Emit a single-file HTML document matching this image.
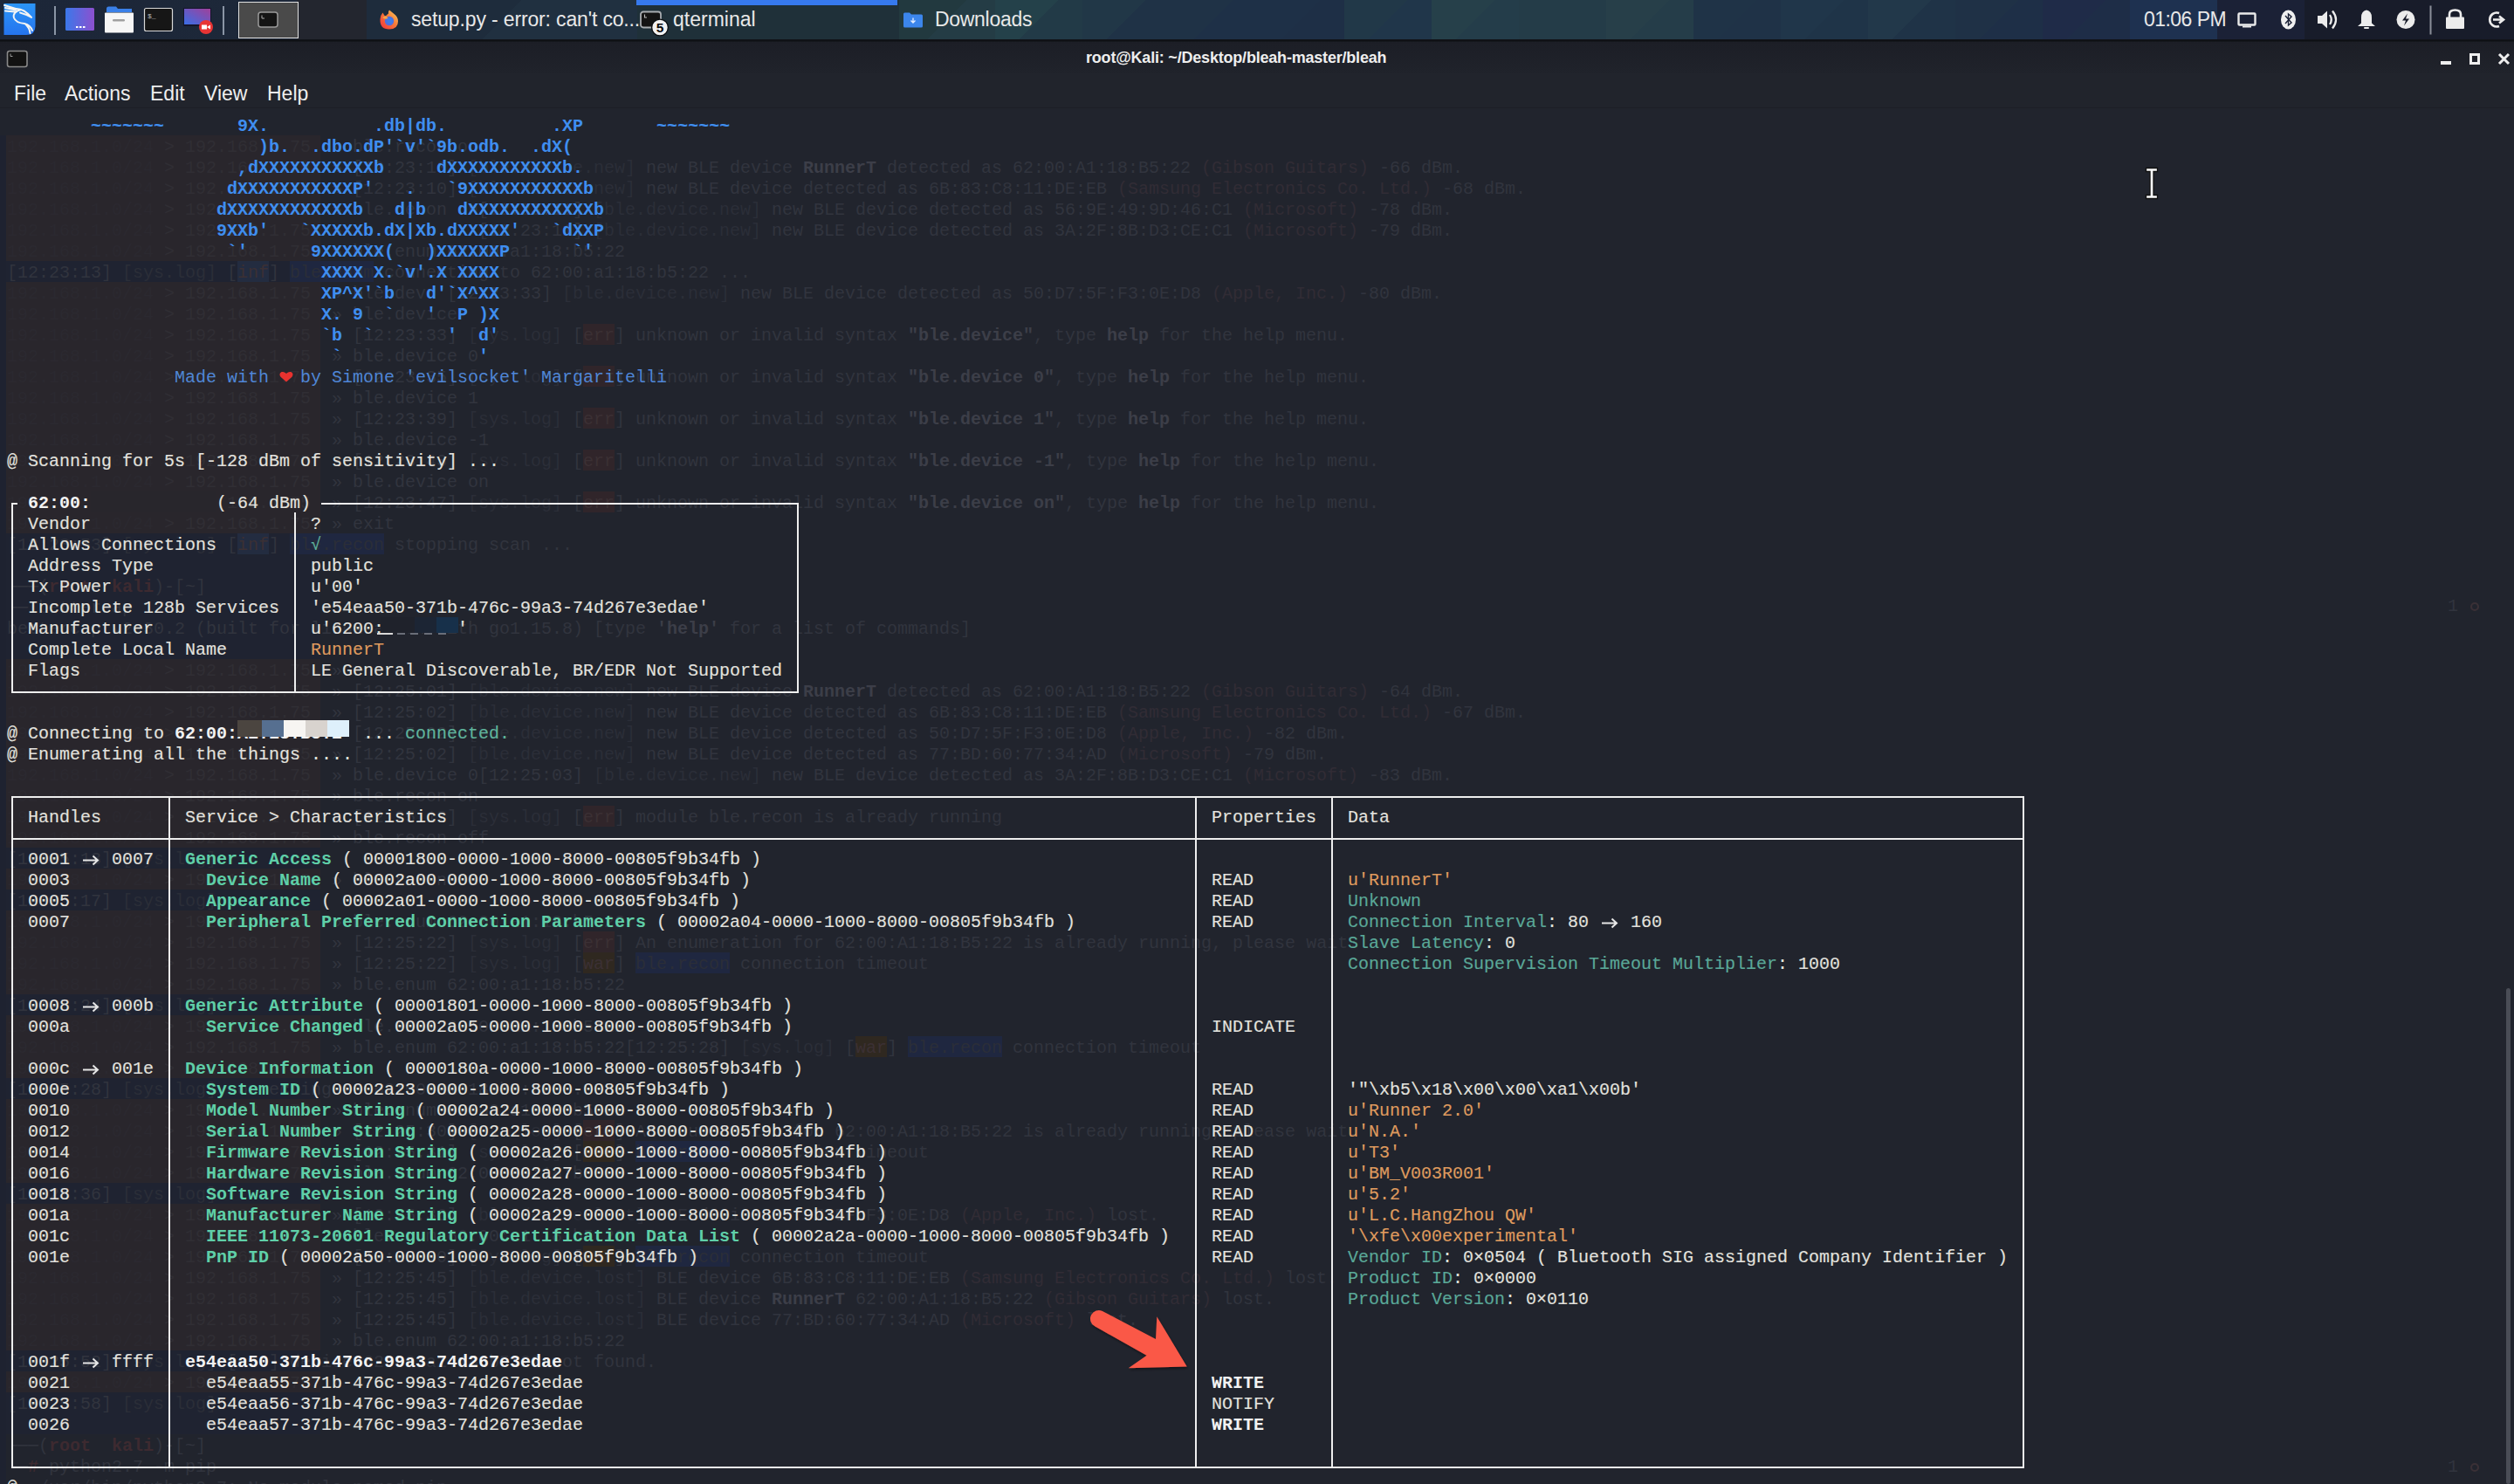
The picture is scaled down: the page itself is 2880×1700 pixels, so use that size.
<!DOCTYPE html>
<html><head><meta charset="utf-8">
<style>
html,body{margin:0;padding:0;}
body{width:2880px;height:1700px;overflow:hidden;position:relative;background:#21242d;font-family:"Liberation Sans",sans-serif;}
#taskbar{position:absolute;left:0;top:0;width:2880px;height:45px;background:#1e2a3c;}
#tb-shadow{position:absolute;left:0;top:45px;width:2880px;height:3px;background:linear-gradient(180deg,#14161c,#0e1014 50%,#171a20);}
#titlebar{position:absolute;left:0;top:48px;width:2880px;height:36px;background:linear-gradient(180deg,#1c1e26,#20232b);}
#menubar{position:absolute;left:0;top:84px;width:2880px;height:39px;background:#21242c;border-bottom:1px solid #1d1f27;}
#term{position:absolute;left:0;top:124px;width:2880px;height:1576px;background:#21242d;}
.s{position:absolute;white-space:pre;font-family:"Liberation Mono",monospace;font-size:20px;line-height:24px;height:24px;}
.w{color:#e2e1de;-webkit-text-stroke:0.15px #e2e1de;}
.b{color:#f2f2f2;font-weight:bold;}
.bl{color:#3f8ef0;font-weight:bold;}
.bln{color:#4f86d6;}
.g{color:#5fcfa8;font-weight:bold;}
.gr{color:#5fb39c;-webkit-text-stroke:0.15px #5fb39c;}
.t{color:#5aa898;-webkit-text-stroke:0.15px #5aa898;}
.o{color:#df9a5e;-webkit-text-stroke:0.15px #df9a5e;}
.gb{position:absolute;height:24px;}
#ghostleft{position:absolute;left:0;top:155px;width:7px;height:1545px;background:#1e2230;}
.gt{color:#31343e;}
.gd{color:#2b2e38;}
.gbo{color:#3c3e48;font-weight:bold;}
.gr2{color:#312c35;}
.gred{color:#3d2a30;font-weight:bold;}
.gtag{color:#3b3034;}
.gp1{color:#2b2930;}
.gp2{color:#302e34;}
.ln{position:absolute;background:#eeeeee;}
.heart,.arr{display:inline-block;vertical-align:top;}
.heart svg,.arr svg{display:block;}
.heart{width:12px;height:24px;}
.arr{width:24px;height:24px;}
.tbt{position:absolute;top:9px;font-size:23px;color:#e8e8e8;white-space:pre;}
#title{position:absolute;left:1244px;top:56px;font-size:18px;letter-spacing:-0.2px;font-weight:bold;color:#eeeeee;white-space:pre;}
.menu{position:absolute;top:94px;font-size:23px;color:#eeeeee;}
</style></head><body>
<div id="taskbar">
 <div style="position:absolute;left:0;top:0;width:340px;height:45px;background:linear-gradient(90deg,#1c2638,#1d2839)"></div><div style="position:absolute;left:340px;top:0;width:80px;height:45px;background:#23262f"></div>
 <div style="position:absolute;left:420px;top:0;width:310px;height:45px;background:linear-gradient(135deg,#1e2c3c 50%,#203040 50%)"></div>
 <div style="position:absolute;left:730px;top:0;width:300px;height:45px;background:#1f3039"></div>
 <div style="position:absolute;left:1030px;top:0;width:110px;height:45px;background:linear-gradient(135deg,#22393f 50%,#243c45 50%)"></div>
 <div style="position:absolute;left:1140px;top:0;width:100px;height:45px;background:linear-gradient(135deg,#24414a 50%,#223a47 50%)"></div>
 <div style="position:absolute;left:1240px;top:0;width:100px;height:45px;background:linear-gradient(135deg,#213747 50%,#1f3246 50%)"></div>
 <div style="position:absolute;left:1340px;top:0;width:100px;height:45px;background:linear-gradient(135deg,#1f3246 50%,#1e3047 50%)"></div>
 <div style="position:absolute;left:1440px;top:0;width:100px;height:45px;background:linear-gradient(135deg,#1e3047 50%,#1e2f46 50%)"></div>
 <div style="position:absolute;left:1540px;top:0;width:100px;height:45px;background:linear-gradient(135deg,#213848 50%,#20364a 50%)"></div>
 <div style="position:absolute;left:1640px;top:0;width:100px;height:45px;background:linear-gradient(135deg,#26404a 50%,#243d4a 50%)"></div>
 <div style="position:absolute;left:1740px;top:0;width:100px;height:45px;background:linear-gradient(135deg,#243c48 50%,#243c48 50%)"></div>
 <div style="position:absolute;left:1840px;top:0;width:100px;height:45px;background:linear-gradient(135deg,#273f49 50%,#253d49 50%)"></div>
 <div style="position:absolute;left:1940px;top:0;width:100px;height:45px;background:linear-gradient(135deg,#1f3347 50%,#1f3247 50%)"></div>
 <div style="position:absolute;left:2040px;top:0;width:100px;height:45px;background:linear-gradient(135deg,#20364a 50%,#1f3448 50%)"></div>
 <div style="position:absolute;left:2140px;top:0;width:100px;height:45px;background:linear-gradient(135deg,#22384a 50%,#1f3347 50%)"></div>
 <div style="position:absolute;left:2240px;top:0;width:100px;height:45px;background:linear-gradient(135deg,#1f3146 50%,#1e2f47 50%)"></div>
 <div style="position:absolute;left:2340px;top:0;width:100px;height:45px;background:linear-gradient(135deg,#1f2b48 50%,#1e2d47 50%)"></div>
 <div style="position:absolute;left:2440px;top:0;width:100px;height:45px;background:#1e3150"></div>
 <div style="position:absolute;left:2540px;top:0;width:100px;height:45px;background:#1b2136"></div>
 <div style="position:absolute;left:2640px;top:0;width:240px;height:45px;background:#181c2a"></div>
 <!-- kali logo -->
 <svg style="position:absolute;left:0;top:0" width="48" height="45" viewBox="0 0 48 45">
  <defs><linearGradient id="kg" x1="0" y1="0" x2="0" y2="1"><stop offset="0" stop-color="#2b95f8"/><stop offset="1" stop-color="#2574ee"/></linearGradient></defs>
  <path d="M4.5 4 H40.5 V30 Q40.5 40 30 40 H4.5 Z" fill="url(#kg)"/>
  <path d="M5 6 L18 10 M6 9 L18 11.5 M6 12.5 L17 13.5 M17 10 Q27 9 36 20 Q29 16 23 14.5 M24 11 Q14 14 16 20.5 Q18 26 28 27 Q35 29 37 35 M29 27.5 Q34 32 34.5 38" stroke="#f4f4f4" stroke-width="2" fill="none" stroke-linecap="round" stroke-linejoin="round"/>
 </svg>
 <div style="position:absolute;left:62px;top:7px;width:2px;height:33px;background:#8a95a5"></div>
 <div style="position:absolute;left:255px;top:7px;width:2px;height:33px;background:#8a95a5"></div>
 <svg style="position:absolute;left:70px;top:0" width="190" height="45" viewBox="70 0 190 45">
  <defs>
   <linearGradient id="pg" x1="0" y1="0" x2="1" y2="0"><stop offset="0" stop-color="#3b78ea"/><stop offset="1" stop-color="#8c50cf"/></linearGradient>
   <linearGradient id="pg2" x1="0" y1="1" x2="1" y2="0"><stop offset="0" stop-color="#3a6ee6"/><stop offset="1" stop-color="#a0409a"/></linearGradient>
  </defs>
  <rect x="75" y="9" width="33" height="26" rx="1.5" fill="url(#pg)"/>
  <rect x="87" y="30" width="2.5" height="2" fill="#fff"/><rect x="91" y="30" width="2.5" height="2" fill="#fff"/><rect x="95" y="30" width="2.5" height="2" fill="#fff"/>
  <path d="M122 10 Q122 7.5 124.5 7.5 H133 L135 10 H151 V14 H122 Z" fill="#3a80e8"/>
  <rect x="120" y="14.5" width="33" height="23" rx="1" fill="#f6f6f6"/>
  <rect x="129" y="22" width="14" height="2.5" rx="1.2" fill="#a0a0a0"/>
  <rect x="165.5" y="9.5" width="32" height="26" rx="2" fill="#161616" stroke="#d8d8d8" stroke-width="1.2"/>
  <text x="169" y="21" font-family="Liberation Mono" font-size="8" fill="#bbb">$_</text>
  <rect x="210" y="9" width="32" height="21" fill="#15152a"/>
  <rect x="211" y="10" width="30" height="18" fill="url(#pg2)"/>
  <circle cx="236" cy="31" r="8" fill="#e83434"/>
  <rect x="231" y="28.5" width="6" height="5" fill="#fff"/><path d="M237 31 L241 28.5 V33.5 Z" fill="#fff"/>
 </svg>
 <div style="position:absolute;left:273px;top:2px;width:67px;height:40px;background:#4a4a4a;border:1.5px solid #e0e0e0"></div>
 <svg style="position:absolute;left:295px;top:13px" width="25" height="20" viewBox="0 0 25 20"><rect x="1" y="1" width="22" height="17" rx="3" fill="#141414" stroke="#9a9a9a" stroke-width="1.5"/><path d="M5 4.5 V8 H8" stroke="#aaa" stroke-width="1" fill="none"/></svg>
 <!-- tabs -->
 <svg style="position:absolute;left:432px;top:9px" width="27" height="27" viewBox="0 0 27 27">
  <defs><linearGradient id="ffg" x1="0" y1="1" x2="1" y2="0"><stop offset="0" stop-color="#f0303e"/><stop offset="0.55" stop-color="#f77a38"/><stop offset="1" stop-color="#fbd660"/></linearGradient></defs>
  <path d="M3.5 13 Q4 8 6.5 5.5 Q8 8.5 9.5 10 Q11 7.5 13 6.5 Q12.5 4 14 2.5 Q17 5 19.5 7 Q24 10 24 15.5 Q24 24.5 13.8 24.5 Q3 24.5 3.5 13 Z" fill="url(#ffg)"/>
  <circle cx="14" cy="15" r="5.2" fill="#4f6ee0"/><circle cx="14.5" cy="15" r="3.2" fill="#3d7de8"/>
  <path d="M6 11 Q9 14 12.5 12 L10 9 Z" fill="#f9a548"/>
 </svg>
 <div class="tbt" style="left:471px;letter-spacing:-0.15px">setup.py - error: can't co...</div>
 <div style="position:absolute;left:729px;top:0;width:299px;height:6px;background:#3679ee"></div>
 <svg style="position:absolute;left:732px;top:12px" width="36" height="32" viewBox="0 0 36 32"><rect x="2" y="1.5" width="23" height="18" rx="3" fill="#141414" stroke="#a8acb0" stroke-width="1.8"/><path d="M6.5 4.5 V8 H9" stroke="#bbb" stroke-width="1.1" fill="none"/><circle cx="24" cy="19.5" r="9.4" fill="#f2f2f2" stroke="#0c0f12" stroke-width="1.4"/><text x="24" y="25" text-anchor="middle" font-family="Liberation Sans" font-weight="bold" font-size="15.5" fill="#0a0a0a">5</text></svg>
 <div class="tbt" style="left:771px">qterminal</div>
 <svg style="position:absolute;left:1034px;top:13px" width="24" height="20" viewBox="0 0 24 20"><path d="M1 3 Q1 1.5 2.5 1.5 H8 L10 3.5 H21.5 Q23 3.5 23 5 V17 Q23 18.5 21.5 18.5 H2.5 Q1 18.5 1 17 Z" fill="#3c86ec"/><path d="M12 7.5 V13 M9.5 10.5 L12 13 L14.5 10.5" stroke="#e8f0ff" stroke-width="1.3" fill="none"/></svg>
 <div class="tbt" style="left:1071px;letter-spacing:-0.3px">Downloads</div>
 <!-- right -->
 <div class="tbt" style="left:2456px;letter-spacing:-0.55px">01:06 PM</div>
 <svg style="position:absolute;left:2555px;top:0" width="325" height="45" viewBox="2555 0 325 45">
  <rect x="2564.5" y="15.5" width="19" height="13" rx="1" fill="none" stroke="#eaeaea" stroke-width="2.4"/>
  <path d="M2569 30.5 H2579" stroke="#eaeaea" stroke-width="2"/>
  <ellipse cx="2621.5" cy="22.5" rx="8.5" ry="11" fill="#f0f0f0"/>
  <path d="M2618 18 L2625 26 L2621.5 29 V16 L2625 19 L2618 27" stroke="#1b2136" stroke-width="1.4" fill="none"/>
  <path d="M2655 18 H2660 L2666 12.5 V32.5 L2660 27 H2655 Z" fill="#ececec"/>
  <path d="M2669 17 Q2672.5 22.5 2669 28" stroke="#ececec" stroke-width="2.3" fill="none"/>
  <path d="M2672 12.5 Q2680 22.5 2672 32.5" stroke="#ececec" stroke-width="2.3" fill="none"/>
  <path d="M2711 11.5 Q2705 12.5 2705 20 V26.5 L2701 30 H2721 L2717 26.5 V20 Q2717 12.5 2711 11.5 Z" fill="#ececec"/>
  <rect x="2708" y="31" width="6" height="2" rx="1" fill="#ececec"/>
  <circle cx="2756" cy="22.5" r="10.5" fill="#ececec"/>
  <path d="M2758 15.5 L2752 23.5 H2756 L2754 29.5 L2760 21.5 H2756 Z" fill="#181c2a"/>
  <rect x="2783.5" y="6.5" width="2" height="33" fill="#8a8e98"/>
  <path d="M2806 20 V16.5 Q2806 11.5 2812.5 11.5 Q2819 11.5 2819 16.5 V20" stroke="#ececec" stroke-width="2.6" fill="none"/>
  <rect x="2802" y="19.5" width="21" height="13.5" rx="1" fill="#ececec"/>
  <path d="M2863 15 A8 8 0 1 0 2863 30" stroke="#ececec" stroke-width="2.6" fill="none"/>
  <path d="M2856 22.5 H2866 M2863 18.5 L2868 22.5 L2863 26.5" stroke="#ececec" stroke-width="2.6" fill="none"/>
 </svg>
</div>
<div id="tb-shadow"></div>
<div id="titlebar"></div>
<div id="menubar"></div>
<div id="term"></div>
<svg style="position:absolute;left:7px;top:57px" width="26" height="22" viewBox="0 0 26 22"><rect x="1.5" y="1.5" width="22.5" height="18" rx="2.5" fill="#121212" stroke="#8a8a8a" stroke-width="1.6"/><path d="M5 4.5 V7.5 H7.5" stroke="#999" stroke-width="1" fill="none"/></svg>
<div id="title">root@Kali: ~/Desktop/bleah-master/bleah</div>
<div style="position:absolute;left:2796px;top:70px;width:12px;height:4px;background:#eeeeee"></div>
<div style="position:absolute;left:2829px;top:61px;width:6px;height:7px;border:3px solid #eeeeee"></div>
<svg style="position:absolute;left:2860px;top:59px" width="17" height="17" viewBox="0 0 17 17"><path d="M3 3 L14 14 M14 3 L3 14" stroke="#eeeeee" stroke-width="3"/></svg>
<div class="menu" style="left:16px">File</div>
<div class="menu" style="left:74px">Actions</div>
<div class="menu" style="left:172px">Edit</div>
<div class="menu" style="left:234px">View</div>
<div class="menu" style="left:306px">Help</div>

<div id="ghostleft"></div>
<div class="gb" style="left:7px;top:155px;width:360px;background:#29262c"></div>
<div class="gb" style="left:7px;top:179px;width:360px;background:#29262c"></div>
<div class="gb" style="left:7px;top:203px;width:360px;background:#29262c"></div>
<div class="gb" style="left:7px;top:227px;width:360px;background:#29262c"></div>
<div class="gb" style="left:7px;top:251px;width:360px;background:#29262c"></div>
<div class="gb" style="left:7px;top:275px;width:360px;background:#29262c"></div>
<div class="gb" style="left:7px;top:299px;width:360px;background:#1f2331"></div>
<div class="gb" style="left:272px;top:299px;width:36px;background:#232c40"></div>
<div class="gb" style="left:332px;top:299px;width:96px;background:#1f2740"></div>
<div class="gb" style="left:7px;top:323px;width:360px;background:#29262c"></div>
<div class="gb" style="left:7px;top:347px;width:360px;background:#29262c"></div>
<div class="gb" style="left:7px;top:371px;width:360px;background:#29262c"></div>
<div class="gb" style="left:668px;top:371px;width:36px;background:#30252a"></div>
<div class="gb" style="left:7px;top:419px;width:360px;background:#29262c"></div>
<div class="gb" style="left:668px;top:419px;width:36px;background:#30252a"></div>
<div class="gb" style="left:7px;top:467px;width:360px;background:#29262c"></div>
<div class="gb" style="left:668px;top:467px;width:36px;background:#30252a"></div>
<div class="gb" style="left:7px;top:515px;width:360px;background:#29262c"></div>
<div class="gb" style="left:668px;top:515px;width:36px;background:#30252a"></div>
<div class="gb" style="left:7px;top:563px;width:360px;background:#29262c"></div>
<div class="gb" style="left:668px;top:563px;width:36px;background:#30252a"></div>
<div class="gb" style="left:7px;top:395px;width:360px;background:#29262c"></div>
<div class="gb" style="left:7px;top:443px;width:360px;background:#29262c"></div>
<div class="gb" style="left:7px;top:491px;width:360px;background:#29262c"></div>
<div class="gb" style="left:7px;top:539px;width:360px;background:#29262c"></div>
<div class="gb" style="left:7px;top:587px;width:360px;background:#29262c"></div>
<div class="gb" style="left:7px;top:611px;width:360px;background:#1f2331"></div>
<div class="gb" style="left:272px;top:611px;width:36px;background:#232c40"></div>
<div class="gb" style="left:332px;top:611px;width:108px;background:#1f2740"></div>
<div class="gb" style="left:7px;top:635px;width:360px;background:#1f2331"></div>
<div class="gb" style="left:7px;top:659px;width:360px;background:#1f2331"></div>
<div class="gb" style="left:7px;top:683px;width:360px;background:#1f2331"></div>
<div class="gb" style="left:7px;top:707px;width:360px;background:#1f2331"></div>
<div class="gb" style="left:7px;top:731px;width:360px;background:#1f2331"></div>
<div class="gb" style="left:7px;top:755px;width:360px;background:#29262c"></div>
<div class="gb" style="left:7px;top:779px;width:360px;background:#29262c"></div>
<div class="gb" style="left:7px;top:803px;width:360px;background:#29262c"></div>
<div class="gb" style="left:7px;top:827px;width:360px;background:#29262c"></div>
<div class="gb" style="left:7px;top:851px;width:360px;background:#29262c"></div>
<div class="gb" style="left:7px;top:875px;width:360px;background:#29262c"></div>
<div class="gb" style="left:7px;top:899px;width:360px;background:#29262c"></div>
<div class="gb" style="left:7px;top:923px;width:360px;background:#29262c"></div>
<div class="gb" style="left:668px;top:923px;width:36px;background:#30252a"></div>
<div class="gb" style="left:7px;top:947px;width:360px;background:#29262c"></div>
<div class="gb" style="left:7px;top:971px;width:360px;background:#1f2331"></div>
<div class="gb" style="left:7px;top:995px;width:360px;background:#29262c"></div>
<div class="gb" style="left:7px;top:1019px;width:360px;background:#1f2331"></div>
<div class="gb" style="left:7px;top:1043px;width:360px;background:#29262c"></div>
<div class="gb" style="left:7px;top:1067px;width:360px;background:#29262c"></div>
<div class="gb" style="left:668px;top:1067px;width:36px;background:#30252a"></div>
<div class="gb" style="left:7px;top:1091px;width:360px;background:#29262c"></div>
<div class="gb" style="left:668px;top:1091px;width:36px;background:#2f2820"></div>
<div class="gb" style="left:728px;top:1091px;width:108px;background:#1f2740"></div>
<div class="gb" style="left:7px;top:1115px;width:360px;background:#29262c"></div>
<div class="gb" style="left:7px;top:1139px;width:360px;background:#1f2331"></div>
<div class="gb" style="left:7px;top:1163px;width:360px;background:#29262c"></div>
<div class="gb" style="left:7px;top:1187px;width:360px;background:#29262c"></div>
<div class="gb" style="left:980px;top:1187px;width:36px;background:#2f2820"></div>
<div class="gb" style="left:1040px;top:1187px;width:108px;background:#1f2740"></div>
<div class="gb" style="left:7px;top:1211px;width:360px;background:#29262c"></div>
<div class="gb" style="left:7px;top:1235px;width:360px;background:#1f2331"></div>
<div class="gb" style="left:7px;top:1259px;width:360px;background:#29262c"></div>
<div class="gb" style="left:7px;top:1283px;width:360px;background:#29262c"></div>
<div class="gb" style="left:668px;top:1283px;width:36px;background:#30252a"></div>
<div class="gb" style="left:7px;top:1307px;width:360px;background:#29262c"></div>
<div class="gb" style="left:668px;top:1307px;width:36px;background:#2f2820"></div>
<div class="gb" style="left:728px;top:1307px;width:108px;background:#1f2740"></div>
<div class="gb" style="left:7px;top:1331px;width:360px;background:#29262c"></div>
<div class="gb" style="left:7px;top:1355px;width:360px;background:#1f2331"></div>
<div class="gb" style="left:7px;top:1379px;width:360px;background:#29262c"></div>
<div class="gb" style="left:7px;top:1403px;width:360px;background:#29262c"></div>
<div class="gb" style="left:7px;top:1427px;width:360px;background:#29262c"></div>
<div class="gb" style="left:668px;top:1427px;width:36px;background:#2f2820"></div>
<div class="gb" style="left:728px;top:1427px;width:108px;background:#1f2740"></div>
<div class="gb" style="left:7px;top:1451px;width:360px;background:#29262c"></div>
<div class="gb" style="left:7px;top:1475px;width:360px;background:#29262c"></div>
<div class="gb" style="left:7px;top:1499px;width:360px;background:#29262c"></div>
<div class="gb" style="left:7px;top:1523px;width:360px;background:#29262c"></div>
<div class="gb" style="left:7px;top:1547px;width:360px;background:#1f2331"></div>
<div class="gb" style="left:7px;top:1571px;width:360px;background:#29262c"></div>
<div class="gb" style="left:7px;top:1595px;width:360px;background:#1f2331"></div>
<div class="gb" style="left:7px;top:1619px;width:360px;background:#1f2331"></div>
<span class="s gp1" style="left:8px;top:157px">192.168.1.0/24</span>
<span class="s gp2" style="left:188px;top:157px">&gt; 192.168.1.75</span>
<span class="s gt" style="left:380px;top:157px">»</span>
<span class="s gt" style="left:404px;top:157px">ble.recon on</span>
<span class="s gp1" style="left:8px;top:181px">192.168.1.0/24</span>
<span class="s gp2" style="left:188px;top:181px">&gt; 192.168.1.75</span>
<span class="s gt" style="left:380px;top:181px">»</span>
<span class="s gt" style="left:404px;top:181px">[12:23:10]</span>
<span class="s gd" style="left:536px;top:181px">[ble.device.new]</span>
<span class="s gt" style="left:740px;top:181px">new BLE device</span>
<span class="s gbo" style="left:920px;top:181px">RunnerT</span>
<span class="s gt" style="left:1016px;top:181px">detected as 62:00:A1:18:B5:22 </span>
<span class="s gr2" style="left:1376px;top:181px">(Gibson Guitars)</span>
<span class="s gt" style="left:1580px;top:181px">-66 dBm.</span>
<span class="s gp1" style="left:8px;top:205px">192.168.1.0/24</span>
<span class="s gp2" style="left:188px;top:205px">&gt; 192.168.1.75</span>
<span class="s gt" style="left:380px;top:205px">»</span>
<span class="s gt" style="left:404px;top:205px">[12:23:10]</span>
<span class="s gd" style="left:536px;top:205px">[ble.device.new]</span>
<span class="s gt" style="left:740px;top:205px">new BLE device</span>
<span class="s gt" style="left:920px;top:205px">detected as 6B:83:C8:11:DE:EB </span>
<span class="s gr2" style="left:1280px;top:205px">(Samsung Electronics Co. Ltd.)</span>
<span class="s gt" style="left:1652px;top:205px">-68 dBm.</span>
<span class="s gp1" style="left:8px;top:229px">192.168.1.0/24</span>
<span class="s gp2" style="left:188px;top:229px">&gt; 192.168.1.75</span>
<span class="s gt" style="left:380px;top:229px">»</span>
<span class="s gt" style="left:404px;top:229px">ble.recon on</span>
<span class="s gt" style="left:548px;top:229px">[12:23:11]</span>
<span class="s gd" style="left:680px;top:229px">[ble.device.new]</span>
<span class="s gt" style="left:884px;top:229px">new BLE device</span>
<span class="s gt" style="left:1064px;top:229px">detected as 56:9E:49:9D:46:C1 </span>
<span class="s gr2" style="left:1424px;top:229px">(Microsoft)</span>
<span class="s gt" style="left:1568px;top:229px">-78 dBm.</span>
<span class="s gp1" style="left:8px;top:253px">192.168.1.0/24</span>
<span class="s gp2" style="left:188px;top:253px">&gt; 192.168.1.75</span>
<span class="s gt" style="left:380px;top:253px">»</span>
<span class="s gt" style="left:548px;top:253px">[12:23:11]</span>
<span class="s gd" style="left:680px;top:253px">[ble.device.new]</span>
<span class="s gt" style="left:884px;top:253px">new BLE device</span>
<span class="s gt" style="left:1064px;top:253px">detected as 3A:2F:8B:D3:CE:C1 </span>
<span class="s gr2" style="left:1424px;top:253px">(Microsoft)</span>
<span class="s gt" style="left:1568px;top:253px">-79 dBm.</span>
<span class="s gp1" style="left:8px;top:277px">192.168.1.0/24</span>
<span class="s gp2" style="left:188px;top:277px">&gt; 192.168.1.75</span>
<span class="s gt" style="left:380px;top:277px">»</span>
<span class="s gt" style="left:404px;top:277px">ble.enum 62:00:a1:18:b5:22</span>
<span class="s gt" style="left:8px;top:301px">[12:23:13]</span>
<span class="s gd" style="left:140px;top:301px">[sys.log]</span>
<span class="s gt" style="left:260px;top:301px">[</span>
<span class="s gtag" style="left:272px;top:301px">inf</span>
<span class="s gt" style="left:308px;top:301px">]</span>
<span class="s gd" style="left:332px;top:301px">ble.enum</span>
<span class="s gt" style="left:440px;top:301px">connecting to 62:00:a1:18:b5:22 ...</span>
<span class="s gp1" style="left:8px;top:325px">192.168.1.0/24</span>
<span class="s gp2" style="left:188px;top:325px">&gt; 192.168.1.75</span>
<span class="s gt" style="left:380px;top:325px">»</span>
<span class="s gt" style="left:404px;top:325px">ble.dev</span>
<span class="s gt" style="left:512px;top:325px">[12:23:33]</span>
<span class="s gd" style="left:644px;top:325px">[ble.device.new]</span>
<span class="s gt" style="left:848px;top:325px">new BLE device</span>
<span class="s gt" style="left:1028px;top:325px">detected as 50:D7:5F:F3:0E:D8 </span>
<span class="s gr2" style="left:1388px;top:325px">(Apple, Inc.)</span>
<span class="s gt" style="left:1556px;top:325px">-80 dBm.</span>
<span class="s gp1" style="left:8px;top:349px">192.168.1.0/24</span>
<span class="s gp2" style="left:188px;top:349px">&gt; 192.168.1.75</span>
<span class="s gt" style="left:380px;top:349px">»</span>
<span class="s gt" style="left:404px;top:349px">ble.device</span>
<span class="s gp1" style="left:8px;top:373px">192.168.1.0/24</span>
<span class="s gp2" style="left:188px;top:373px">&gt; 192.168.1.75</span>
<span class="s gt" style="left:380px;top:373px">»</span>
<span class="s gt" style="left:404px;top:373px">[12:23:33]</span>
<span class="s gd" style="left:536px;top:373px">[sys.log]</span>
<span class="s gt" style="left:656px;top:373px">[</span>
<span class="s gtag" style="left:668px;top:373px">err</span>
<span class="s gt" style="left:704px;top:373px">]</span>
<span class="s gt" style="left:728px;top:373px">unknown or invalid syntax </span>
<span class="s gbo" style="left:1040px;top:373px">&quot;ble.device&quot;</span>
<span class="s gt" style="left:1184px;top:373px">, type </span>
<span class="s gbo" style="left:1268px;top:373px">help</span>
<span class="s gt" style="left:1316px;top:373px"> for the help menu.</span>
<span class="s gp1" style="left:8px;top:421px">192.168.1.0/24</span>
<span class="s gp2" style="left:188px;top:421px">&gt; 192.168.1.75</span>
<span class="s gt" style="left:380px;top:421px">»</span>
<span class="s gt" style="left:404px;top:421px">[12:23:35]</span>
<span class="s gd" style="left:536px;top:421px">[sys.log]</span>
<span class="s gt" style="left:656px;top:421px">[</span>
<span class="s gtag" style="left:668px;top:421px">err</span>
<span class="s gt" style="left:704px;top:421px">]</span>
<span class="s gt" style="left:728px;top:421px">unknown or invalid syntax </span>
<span class="s gbo" style="left:1040px;top:421px">&quot;ble.device 0&quot;</span>
<span class="s gt" style="left:1208px;top:421px">, type </span>
<span class="s gbo" style="left:1292px;top:421px">help</span>
<span class="s gt" style="left:1340px;top:421px"> for the help menu.</span>
<span class="s gp1" style="left:8px;top:469px">192.168.1.0/24</span>
<span class="s gp2" style="left:188px;top:469px">&gt; 192.168.1.75</span>
<span class="s gt" style="left:380px;top:469px">»</span>
<span class="s gt" style="left:404px;top:469px">[12:23:39]</span>
<span class="s gd" style="left:536px;top:469px">[sys.log]</span>
<span class="s gt" style="left:656px;top:469px">[</span>
<span class="s gtag" style="left:668px;top:469px">err</span>
<span class="s gt" style="left:704px;top:469px">]</span>
<span class="s gt" style="left:728px;top:469px">unknown or invalid syntax </span>
<span class="s gbo" style="left:1040px;top:469px">&quot;ble.device 1&quot;</span>
<span class="s gt" style="left:1208px;top:469px">, type </span>
<span class="s gbo" style="left:1292px;top:469px">help</span>
<span class="s gt" style="left:1340px;top:469px"> for the help menu.</span>
<span class="s gp1" style="left:8px;top:517px">192.168.1.0/24</span>
<span class="s gp2" style="left:188px;top:517px">&gt; 192.168.1.75</span>
<span class="s gt" style="left:380px;top:517px">»</span>
<span class="s gt" style="left:404px;top:517px">[12:23:43]</span>
<span class="s gd" style="left:536px;top:517px">[sys.log]</span>
<span class="s gt" style="left:656px;top:517px">[</span>
<span class="s gtag" style="left:668px;top:517px">err</span>
<span class="s gt" style="left:704px;top:517px">]</span>
<span class="s gt" style="left:728px;top:517px">unknown or invalid syntax </span>
<span class="s gbo" style="left:1040px;top:517px">&quot;ble.device -1&quot;</span>
<span class="s gt" style="left:1220px;top:517px">, type </span>
<span class="s gbo" style="left:1304px;top:517px">help</span>
<span class="s gt" style="left:1352px;top:517px"> for the help menu.</span>
<span class="s gp1" style="left:8px;top:565px">192.168.1.0/24</span>
<span class="s gp2" style="left:188px;top:565px">&gt; 192.168.1.75</span>
<span class="s gt" style="left:380px;top:565px">»</span>
<span class="s gt" style="left:404px;top:565px">[12:23:47]</span>
<span class="s gd" style="left:536px;top:565px">[sys.log]</span>
<span class="s gt" style="left:656px;top:565px">[</span>
<span class="s gtag" style="left:668px;top:565px">err</span>
<span class="s gt" style="left:704px;top:565px">]</span>
<span class="s gt" style="left:728px;top:565px">unknown or invalid syntax </span>
<span class="s gbo" style="left:1040px;top:565px">&quot;ble.device on&quot;</span>
<span class="s gt" style="left:1220px;top:565px">, type </span>
<span class="s gbo" style="left:1304px;top:565px">help</span>
<span class="s gt" style="left:1352px;top:565px"> for the help menu.</span>
<span class="s gp1" style="left:8px;top:397px">192.168.1.0/24</span>
<span class="s gp2" style="left:188px;top:397px">&gt; 192.168.1.75</span>
<span class="s gt" style="left:380px;top:397px">»</span>
<span class="s gt" style="left:404px;top:397px">ble.device 0</span>
<span class="s gp1" style="left:8px;top:445px">192.168.1.0/24</span>
<span class="s gp2" style="left:188px;top:445px">&gt; 192.168.1.75</span>
<span class="s gt" style="left:380px;top:445px">»</span>
<span class="s gt" style="left:404px;top:445px">ble.device 1</span>
<span class="s gp1" style="left:8px;top:493px">192.168.1.0/24</span>
<span class="s gp2" style="left:188px;top:493px">&gt; 192.168.1.75</span>
<span class="s gt" style="left:380px;top:493px">»</span>
<span class="s gt" style="left:404px;top:493px">ble.device -1</span>
<span class="s gp1" style="left:8px;top:541px">192.168.1.0/24</span>
<span class="s gp2" style="left:188px;top:541px">&gt; 192.168.1.75</span>
<span class="s gt" style="left:380px;top:541px">»</span>
<span class="s gt" style="left:404px;top:541px">ble.device on</span>
<span class="s gp1" style="left:8px;top:589px">192.168.1.0/24</span>
<span class="s gp2" style="left:188px;top:589px">&gt; 192.168.1.75</span>
<span class="s gt" style="left:380px;top:589px">»</span>
<span class="s gt" style="left:404px;top:589px">exit</span>
<span class="s gt" style="left:8px;top:613px">[12:23:53]</span>
<span class="s gd" style="left:140px;top:613px">[sys.log]</span>
<span class="s gt" style="left:260px;top:613px">[</span>
<span class="s gtag" style="left:272px;top:613px">inf</span>
<span class="s gt" style="left:308px;top:613px">]</span>
<span class="s gd" style="left:332px;top:613px">ble.recon</span>
<span class="s gt" style="left:452px;top:613px">stopping scan ...</span>
<span class="s gt" style="left:8px;top:661px">┌──(</span>
<span class="s gred" style="left:56px;top:661px">root</span>
<span class="s gred" style="left:128px;top:661px">kali</span>
<span class="s gt" style="left:176px;top:661px">)-[~]</span>
<span class="s gt" style="left:8px;top:685px">└─</span>
<span class="s gt" style="left:44px;top:685px">bettercap</span>
<span class="s gt" style="left:8px;top:709px">bettercap v2.30.2 (built for linux amd64 with go1.15.8) [type </span>
<span class="s gbo" style="left:752px;top:709px">&#x27;help&#x27;</span>
<span class="s gt" style="left:836px;top:709px">for a list of commands]</span>
<span class="s gp1" style="left:8px;top:757px">192.168.1.0/24</span>
<span class="s gp2" style="left:188px;top:757px">&gt; 192.168.1.75</span>
<span class="s gt" style="left:380px;top:757px">»</span>
<span class="s gp1" style="left:8px;top:781px">192.168.1.0/24</span>
<span class="s gp2" style="left:188px;top:781px">&gt; 192.168.1.75</span>
<span class="s gt" style="left:380px;top:781px">»</span>
<span class="s gt" style="left:404px;top:781px">[12:25:01]</span>
<span class="s gd" style="left:536px;top:781px">[ble.device.new]</span>
<span class="s gt" style="left:740px;top:781px">new BLE device</span>
<span class="s gbo" style="left:920px;top:781px">RunnerT</span>
<span class="s gt" style="left:1016px;top:781px">detected as 62:00:A1:18:B5:22 </span>
<span class="s gr2" style="left:1376px;top:781px">(Gibson Guitars)</span>
<span class="s gt" style="left:1580px;top:781px">-64 dBm.</span>
<span class="s gp1" style="left:8px;top:805px">192.168.1.0/24</span>
<span class="s gp2" style="left:188px;top:805px">&gt; 192.168.1.75</span>
<span class="s gt" style="left:380px;top:805px">»</span>
<span class="s gt" style="left:404px;top:805px">[12:25:02]</span>
<span class="s gd" style="left:536px;top:805px">[ble.device.new]</span>
<span class="s gt" style="left:740px;top:805px">new BLE device</span>
<span class="s gt" style="left:920px;top:805px">detected as 6B:83:C8:11:DE:EB </span>
<span class="s gr2" style="left:1280px;top:805px">(Samsung Electronics Co. Ltd.)</span>
<span class="s gt" style="left:1652px;top:805px">-67 dBm.</span>
<span class="s gp1" style="left:8px;top:829px">192.168.1.0/24</span>
<span class="s gp2" style="left:188px;top:829px">&gt; 192.168.1.75</span>
<span class="s gt" style="left:380px;top:829px">»</span>
<span class="s gt" style="left:404px;top:829px">[12:25:02]</span>
<span class="s gd" style="left:536px;top:829px">[ble.device.new]</span>
<span class="s gt" style="left:740px;top:829px">new BLE device</span>
<span class="s gt" style="left:920px;top:829px">detected as 50:D7:5F:F3:0E:D8 </span>
<span class="s gr2" style="left:1280px;top:829px">(Apple, Inc.)</span>
<span class="s gt" style="left:1448px;top:829px">-82 dBm.</span>
<span class="s gp1" style="left:8px;top:853px">192.168.1.0/24</span>
<span class="s gp2" style="left:188px;top:853px">&gt; 192.168.1.75</span>
<span class="s gt" style="left:380px;top:853px">»</span>
<span class="s gt" style="left:404px;top:853px">[12:25:02]</span>
<span class="s gd" style="left:536px;top:853px">[ble.device.new]</span>
<span class="s gt" style="left:740px;top:853px">new BLE device</span>
<span class="s gt" style="left:920px;top:853px">detected as 77:BD:60:77:34:AD </span>
<span class="s gr2" style="left:1280px;top:853px">(Microsoft)</span>
<span class="s gt" style="left:1424px;top:853px">-79 dBm.</span>
<span class="s gp1" style="left:8px;top:877px">192.168.1.0/24</span>
<span class="s gp2" style="left:188px;top:877px">&gt; 192.168.1.75</span>
<span class="s gt" style="left:380px;top:877px">»</span>
<span class="s gt" style="left:404px;top:877px">ble.device 0</span>
<span class="s gt" style="left:548px;top:877px">[12:25:03]</span>
<span class="s gd" style="left:680px;top:877px">[ble.device.new]</span>
<span class="s gt" style="left:884px;top:877px">new BLE device</span>
<span class="s gt" style="left:1064px;top:877px">detected as 3A:2F:8B:D3:CE:C1 </span>
<span class="s gr2" style="left:1424px;top:877px">(Microsoft)</span>
<span class="s gt" style="left:1568px;top:877px">-83 dBm.</span>
<span class="s gp1" style="left:8px;top:901px">192.168.1.0/24</span>
<span class="s gp2" style="left:188px;top:901px">&gt; 192.168.1.75</span>
<span class="s gt" style="left:380px;top:901px">»</span>
<span class="s gt" style="left:404px;top:901px">ble.recon on</span>
<span class="s gp1" style="left:8px;top:925px">192.168.1.0/24</span>
<span class="s gp2" style="left:188px;top:925px">&gt; 192.168.1.75</span>
<span class="s gt" style="left:380px;top:925px">»</span>
<span class="s gt" style="left:404px;top:925px">[12:25:12]</span>
<span class="s gd" style="left:536px;top:925px">[sys.log]</span>
<span class="s gt" style="left:656px;top:925px">[</span>
<span class="s gtag" style="left:668px;top:925px">err</span>
<span class="s gt" style="left:704px;top:925px">]</span>
<span class="s gt" style="left:728px;top:925px">module ble.recon is already running</span>
<span class="s gp1" style="left:8px;top:949px">192.168.1.0/24</span>
<span class="s gp2" style="left:188px;top:949px">&gt; 192.168.1.75</span>
<span class="s gt" style="left:380px;top:949px">»</span>
<span class="s gt" style="left:404px;top:949px">ble.recon off</span>
<span class="s gt" style="left:8px;top:973px">[12:25:13]</span>
<span class="s gd" style="left:140px;top:973px">[sys.log]</span>
<span class="s gp1" style="left:8px;top:997px">192.168.1.0/24</span>
<span class="s gp2" style="left:188px;top:997px">&gt; 192.168.1.75</span>
<span class="s gt" style="left:380px;top:997px">»</span>
<span class="s gt" style="left:404px;top:997px">ble.recon on</span>
<span class="s gt" style="left:8px;top:1021px">[12:25:17]</span>
<span class="s gd" style="left:140px;top:1021px">[sys.log]</span>
<span class="s gp1" style="left:8px;top:1045px">192.168.1.0/24</span>
<span class="s gp2" style="left:188px;top:1045px">&gt; 192.168.1.75</span>
<span class="s gt" style="left:380px;top:1045px">»</span>
<span class="s gt" style="left:404px;top:1045px">ble.enum 62:00:a1:18:b5:22</span>
<span class="s gp1" style="left:8px;top:1069px">192.168.1.0/24</span>
<span class="s gp2" style="left:188px;top:1069px">&gt; 192.168.1.75</span>
<span class="s gt" style="left:380px;top:1069px">»</span>
<span class="s gt" style="left:404px;top:1069px">[12:25:22]</span>
<span class="s gd" style="left:536px;top:1069px">[sys.log]</span>
<span class="s gt" style="left:656px;top:1069px">[</span>
<span class="s gtag" style="left:668px;top:1069px">err</span>
<span class="s gt" style="left:704px;top:1069px">]</span>
<span class="s gt" style="left:728px;top:1069px">An enumeration for 62:00:A1:18:B5:22 is already running, please wait.</span>
<span class="s gp1" style="left:8px;top:1093px">192.168.1.0/24</span>
<span class="s gp2" style="left:188px;top:1093px">&gt; 192.168.1.75</span>
<span class="s gt" style="left:380px;top:1093px">»</span>
<span class="s gt" style="left:404px;top:1093px">[12:25:22]</span>
<span class="s gd" style="left:536px;top:1093px">[sys.log]</span>
<span class="s gt" style="left:656px;top:1093px">[</span>
<span class="s gtag" style="left:668px;top:1093px">war</span>
<span class="s gt" style="left:704px;top:1093px">]</span>
<span class="s gd" style="left:728px;top:1093px">ble.recon</span>
<span class="s gt" style="left:848px;top:1093px">connection timeout</span>
<span class="s gp1" style="left:8px;top:1117px">192.168.1.0/24</span>
<span class="s gp2" style="left:188px;top:1117px">&gt; 192.168.1.75</span>
<span class="s gt" style="left:380px;top:1117px">»</span>
<span class="s gt" style="left:404px;top:1117px">ble.enum 62:00:a1:18:b5:22</span>
<span class="s gt" style="left:8px;top:1141px">[12:25:24]</span>
<span class="s gd" style="left:140px;top:1141px">[sys.log]</span>
<span class="s gp1" style="left:8px;top:1165px">192.168.1.0/24</span>
<span class="s gp2" style="left:188px;top:1165px">&gt; 192.168.1.75</span>
<span class="s gt" style="left:380px;top:1165px">»</span>
<span class="s gt" style="left:404px;top:1165px">ble.enum 62:00:a1:18:b5:22</span>
<span class="s gp1" style="left:8px;top:1189px">192.168.1.0/24</span>
<span class="s gp2" style="left:188px;top:1189px">&gt; 192.168.1.75</span>
<span class="s gt" style="left:380px;top:1189px">»</span>
<span class="s gt" style="left:404px;top:1189px">ble.enum 62:00:a1:18:b5:22</span>
<span class="s gt" style="left:716px;top:1189px">[12:25:28]</span>
<span class="s gd" style="left:848px;top:1189px">[sys.log]</span>
<span class="s gt" style="left:968px;top:1189px">[</span>
<span class="s gtag" style="left:980px;top:1189px">war</span>
<span class="s gt" style="left:1016px;top:1189px">]</span>
<span class="s gd" style="left:1040px;top:1189px">ble.recon</span>
<span class="s gt" style="left:1160px;top:1189px">connection timeout</span>
<span class="s gp1" style="left:8px;top:1213px">192.168.1.0/24</span>
<span class="s gp2" style="left:188px;top:1213px">&gt; 192.168.1.75</span>
<span class="s gt" style="left:380px;top:1213px">»</span>
<span class="s gt" style="left:8px;top:1237px">[12:25:28]</span>
<span class="s gd" style="left:140px;top:1237px">[sys.log]</span>
<span class="s gt" style="left:260px;top:1237px">connecting to 62:00:a1:18:b5:22 ...</span>
<span class="s gp1" style="left:8px;top:1261px">192.168.1.0/24</span>
<span class="s gp2" style="left:188px;top:1261px">&gt; 192.168.1.75</span>
<span class="s gt" style="left:380px;top:1261px">»</span>
<span class="s gt" style="left:404px;top:1261px">ble.enum 62:00:a1:18:b5:22</span>
<span class="s gp1" style="left:8px;top:1285px">192.168.1.0/24</span>
<span class="s gp2" style="left:188px;top:1285px">&gt; 192.168.1.75</span>
<span class="s gt" style="left:380px;top:1285px">»</span>
<span class="s gt" style="left:404px;top:1285px">[12:25:30]</span>
<span class="s gd" style="left:536px;top:1285px">[sys.log]</span>
<span class="s gt" style="left:656px;top:1285px">[</span>
<span class="s gtag" style="left:668px;top:1285px">err</span>
<span class="s gt" style="left:704px;top:1285px">]</span>
<span class="s gt" style="left:728px;top:1285px">An enumeration for 62:00:A1:18:B5:22 is already running, please wait.</span>
<span class="s gp1" style="left:8px;top:1309px">192.168.1.0/24</span>
<span class="s gp2" style="left:188px;top:1309px">&gt; 192.168.1.75</span>
<span class="s gt" style="left:380px;top:1309px">»</span>
<span class="s gt" style="left:404px;top:1309px">[12:25:31]</span>
<span class="s gd" style="left:536px;top:1309px">[sys.log]</span>
<span class="s gt" style="left:656px;top:1309px">[</span>
<span class="s gtag" style="left:668px;top:1309px">war</span>
<span class="s gt" style="left:704px;top:1309px">]</span>
<span class="s gd" style="left:728px;top:1309px">ble.recon</span>
<span class="s gt" style="left:848px;top:1309px">connection timeout</span>
<span class="s gp1" style="left:8px;top:1333px">192.168.1.0/24</span>
<span class="s gp2" style="left:188px;top:1333px">&gt; 192.168.1.75</span>
<span class="s gt" style="left:380px;top:1333px">»</span>
<span class="s gt" style="left:404px;top:1333px">ble.enum 62:00:a1:18:b5:22</span>
<span class="s gt" style="left:8px;top:1357px">[12:25:36]</span>
<span class="s gd" style="left:140px;top:1357px">[sys.log]</span>
<span class="s gp1" style="left:8px;top:1381px">192.168.1.0/24</span>
<span class="s gp2" style="left:188px;top:1381px">&gt; 192.168.1.75</span>
<span class="s gt" style="left:380px;top:1381px">»</span>
<span class="s gt" style="left:404px;top:1381px">[12:25:36]</span>
<span class="s gd" style="left:536px;top:1381px">[ble.device.lost]</span>
<span class="s gt" style="left:752px;top:1381px">BLE device 50:D7:5F:F3:0E:D8 </span>
<span class="s gr2" style="left:1100px;top:1381px">(Apple, Inc.)</span>
<span class="s gt" style="left:1268px;top:1381px">lost.</span>
<span class="s gp1" style="left:8px;top:1405px">192.168.1.0/24</span>
<span class="s gp2" style="left:188px;top:1405px">&gt; 192.168.1.75</span>
<span class="s gt" style="left:380px;top:1405px">»</span>
<span class="s gt" style="left:404px;top:1405px">ble.enum 62:00:a1:18:b5:22</span>
<span class="s gp1" style="left:8px;top:1429px">192.168.1.0/24</span>
<span class="s gp2" style="left:188px;top:1429px">&gt; 192.168.1.75</span>
<span class="s gt" style="left:380px;top:1429px">»</span>
<span class="s gt" style="left:404px;top:1429px">[12:25:40]</span>
<span class="s gd" style="left:536px;top:1429px">[sys.log]</span>
<span class="s gt" style="left:656px;top:1429px">[</span>
<span class="s gtag" style="left:668px;top:1429px">war</span>
<span class="s gt" style="left:704px;top:1429px">]</span>
<span class="s gd" style="left:728px;top:1429px">ble.recon</span>
<span class="s gt" style="left:848px;top:1429px">connection timeout</span>
<span class="s gp1" style="left:8px;top:1453px">192.168.1.0/24</span>
<span class="s gp2" style="left:188px;top:1453px">&gt; 192.168.1.75</span>
<span class="s gt" style="left:380px;top:1453px">»</span>
<span class="s gt" style="left:404px;top:1453px">[12:25:45]</span>
<span class="s gd" style="left:536px;top:1453px">[ble.device.lost]</span>
<span class="s gt" style="left:752px;top:1453px">BLE device 6B:83:C8:11:DE:EB </span>
<span class="s gr2" style="left:1100px;top:1453px">(Samsung Electronics Co. Ltd.)</span>
<span class="s gt" style="left:1472px;top:1453px">lost.</span>
<span class="s gp1" style="left:8px;top:1477px">192.168.1.0/24</span>
<span class="s gp2" style="left:188px;top:1477px">&gt; 192.168.1.75</span>
<span class="s gt" style="left:380px;top:1477px">»</span>
<span class="s gt" style="left:404px;top:1477px">[12:25:45]</span>
<span class="s gd" style="left:536px;top:1477px">[ble.device.lost]</span>
<span class="s gt" style="left:752px;top:1477px">BLE device </span>
<span class="s gbo" style="left:884px;top:1477px">RunnerT</span>
<span class="s gt" style="left:980px;top:1477px">62:00:A1:18:B5:22 </span>
<span class="s gr2" style="left:1196px;top:1477px">(Gibson Guitars)</span>
<span class="s gt" style="left:1400px;top:1477px">lost.</span>
<span class="s gp1" style="left:8px;top:1501px">192.168.1.0/24</span>
<span class="s gp2" style="left:188px;top:1501px">&gt; 192.168.1.75</span>
<span class="s gt" style="left:380px;top:1501px">»</span>
<span class="s gt" style="left:404px;top:1501px">[12:25:45]</span>
<span class="s gd" style="left:536px;top:1501px">[ble.device.lost]</span>
<span class="s gt" style="left:752px;top:1501px">BLE device 77:BD:60:77:34:AD </span>
<span class="s gr2" style="left:1100px;top:1501px">(Microsoft)</span>
<span class="s gt" style="left:1244px;top:1501px">lost.</span>
<span class="s gp1" style="left:8px;top:1525px">192.168.1.0/24</span>
<span class="s gp2" style="left:188px;top:1525px">&gt; 192.168.1.75</span>
<span class="s gt" style="left:380px;top:1525px">»</span>
<span class="s gt" style="left:404px;top:1525px">ble.enum 62:00:a1:18:b5:22</span>
<span class="s gt" style="left:8px;top:1549px">[12:25:52]</span>
<span class="s gd" style="left:140px;top:1549px">[sys.log]</span>
<span class="s gt" style="left:260px;top:1549px">[err] device 62:00:a1:18:b5:22 not found.</span>
<span class="s gp1" style="left:8px;top:1573px">192.168.1.0/24</span>
<span class="s gp2" style="left:188px;top:1573px">&gt; 192.168.1.75</span>
<span class="s gt" style="left:380px;top:1573px">»</span>
<span class="s gt" style="left:8px;top:1597px">[12:25:58]</span>
<span class="s gd" style="left:140px;top:1597px">[sys.log]</span>
<span class="s gt" style="left:8px;top:1645px">┌──(</span>
<span class="s gred" style="left:56px;top:1645px">root</span>
<span class="s gred" style="left:128px;top:1645px">kali</span>
<span class="s gt" style="left:176px;top:1645px">)-[~]</span>
<span class="s gt" style="left:8px;top:1669px">└─</span>
<span class="s gred" style="left:32px;top:1669px">#</span>
<span class="s gt" style="left:56px;top:1669px">python2.7 -m pip</span>
<span class="s gt" style="left:44px;top:1693px">/usr/bin/python2.7: No module named pip</span>
<div class="ln" style="left:13px;top:576px;width:7px;height:2px"></div>
<div class="ln" style="left:368px;top:576px;width:547px;height:2px"></div>
<div class="ln" style="left:13px;top:792px;width:902px;height:2px"></div>
<div class="ln" style="left:13px;top:576px;width:2px;height:218px"></div>
<div class="ln" style="left:913px;top:576px;width:2px;height:218px"></div>
<div class="ln" style="left:337px;top:587px;width:2px;height:207px"></div>
<div class="ln" style="left:13px;top:912px;width:2306px;height:2px"></div>
<div class="ln" style="left:13px;top:960px;width:2306px;height:2px"></div>
<div class="ln" style="left:13px;top:1680px;width:2306px;height:2px"></div>
<div class="ln" style="left:13px;top:912px;width:2px;height:770px"></div>
<div class="ln" style="left:193px;top:912px;width:2px;height:770px"></div>
<div class="ln" style="left:1369px;top:912px;width:2px;height:770px"></div>
<div class="ln" style="left:1525px;top:912px;width:2px;height:770px"></div>
<div class="ln" style="left:2317px;top:912px;width:2px;height:770px"></div>
<span class="s bl" style="left:8px;top:133px">        ~~~~~~~       9X.          .db|db.          .XP       ~~~~~~~</span>
<span class="s bl" style="left:8px;top:157px">                        )b.  .dbo.dP&#x27;`v&#x27;`9b.odb.  .dX(</span>
<span class="s bl" style="left:8px;top:181px">                      ,dXXXXXXXXXXXb     dXXXXXXXXXXXb.</span>
<span class="s bl" style="left:8px;top:205px">                     dXXXXXXXXXXXP&#x27;   .   `9XXXXXXXXXXXb</span>
<span class="s bl" style="left:8px;top:229px">                    dXXXXXXXXXXXXb   d|b   dXXXXXXXXXXXXb</span>
<span class="s bl" style="left:8px;top:253px">                    9XXb&#x27;   `XXXXXb.dX|Xb.dXXXXX&#x27;   `dXXP</span>
<span class="s bl" style="left:8px;top:277px">                     `&#x27;      9XXXXXX(   )XXXXXXP      `&#x27;</span>
<span class="s bl" style="left:8px;top:301px">                              XXXX X.`v&#x27;.X XXXX</span>
<span class="s bl" style="left:8px;top:325px">                              XP^X&#x27;`b   d&#x27;`X^XX</span>
<span class="s bl" style="left:8px;top:349px">                              X. 9  `   &#x27;  P )X</span>
<span class="s bl" style="left:8px;top:373px">                              `b  `       &#x27;  d&#x27;</span>
<span class="s bl" style="left:8px;top:397px">                               `             &#x27;</span>
<span class="s bln" style="left:200px;top:421px">Made with <span class="heart"><svg width="12" height="24" viewBox="0 0 12 24" style="overflow:visible"><path transform="translate(2,-1.5)" d="M6 18 L-0.5 12.2 C-2.3 10.4 -1.6 7.2 1 6.6 C3 6.2 5 7.2 6 8.8 C7 7.2 9 6.2 11 6.6 C13.6 7.2 14.3 10.4 12.5 12.2 Z" fill="#e8322f"/></svg></span> by Simone 'evilsocket' Margaritelli</span>
<span class="s w" style="left:8px;top:517px">@ Scanning for 5s [-128 dBm of sensitivity] ...</span>
<span class="s b" style="left:32px;top:565px">62:00:</span>
<span class="s w" style="left:248px;top:565px">(-64 dBm)</span>
<span class="s w" style="left:32px;top:589px">Vendor</span>
<span class="s w" style="left:32px;top:613px">Allows Connections</span>
<span class="s w" style="left:32px;top:637px">Address Type</span>
<span class="s w" style="left:32px;top:661px">Tx Power</span>
<span class="s w" style="left:32px;top:685px">Incomplete 128b Services</span>
<span class="s w" style="left:32px;top:709px">Manufacturer</span>
<span class="s w" style="left:32px;top:733px">Complete Local Name</span>
<span class="s w" style="left:32px;top:757px">Flags</span>
<span class="s w" style="left:356px;top:589px">?</span>
<span class="s gr" style="left:356px;top:613px">√</span>
<span class="s w" style="left:356px;top:637px">public</span>
<span class="s w" style="left:356px;top:661px">u&#x27;00&#x27;</span>
<span class="s w" style="left:356px;top:685px">&#x27;e54eaa50-371b-476c-99a3-74d267e3edae&#x27;</span>
<span class="s w" style="left:356px;top:709px">u&#x27;6200:</span>
<span class="s w" style="left:524px;top:709px">&#x27;</span>
<span class="s o" style="left:356px;top:733px">RunnerT</span>
<span class="s w" style="left:356px;top:757px">LE General Discoverable, BR/EDR Not Supported</span>
<span class="s w" style="left:8px;top:829px">@ Connecting to </span>
<span class="s b" style="left:200px;top:829px">62:00:</span>
<span class="s w" style="left:416px;top:829px">...</span>
<span class="s gr" style="left:464px;top:829px">connected.</span>
<span class="s w" style="left:8px;top:853px">@ Enumerating all the things ....</span>
<span class="s w" style="left:32px;top:925px">Handles</span>
<span class="s w" style="left:212px;top:925px">Service &gt; Characteristics</span>
<span class="s w" style="left:1388px;top:925px">Properties</span>
<span class="s w" style="left:1544px;top:925px">Data</span>
<span class="s w" style="left:32px;top:973px">0001 <span class="arr"><svg width="24" height="24" viewBox="0 0 24 24"><path d="M3 12.5 H20 M14.5 7.5 L20 12.5 L14.5 17.5" stroke="#e6e6e6" stroke-width="2" fill="none"/></svg></span> 0007</span>
<span class="s g" style="left:212px;top:973px">Generic Access</span>
<span class="s w" style="left:380px;top:973px"> ( 00001800-0000-1000-8000-00805f9b34fb )</span>
<span class="s w" style="left:32px;top:997px">0003</span>
<span class="s g" style="left:236px;top:997px">Device Name</span>
<span class="s w" style="left:368px;top:997px"> ( 00002a00-0000-1000-8000-00805f9b34fb )</span>
<span class="s w" style="left:1388px;top:997px">READ</span>
<span class="s o" style="left:1544px;top:997px">u&#x27;RunnerT&#x27;</span>
<span class="s w" style="left:32px;top:1021px">0005</span>
<span class="s g" style="left:236px;top:1021px">Appearance</span>
<span class="s w" style="left:356px;top:1021px"> ( 00002a01-0000-1000-8000-00805f9b34fb )</span>
<span class="s w" style="left:1388px;top:1021px">READ</span>
<span class="s t" style="left:1544px;top:1021px">Unknown</span>
<span class="s w" style="left:32px;top:1045px">0007</span>
<span class="s g" style="left:236px;top:1045px">Peripheral Preferred Connection Parameters</span>
<span class="s w" style="left:740px;top:1045px"> ( 00002a04-0000-1000-8000-00805f9b34fb )</span>
<span class="s w" style="left:1388px;top:1045px">READ</span>
<span class="s t" style="left:1544px;top:1045px">Connection Interval</span>
<span class="s w" style="left:1772px;top:1045px">: 80 <span class="arr"><svg width="24" height="24" viewBox="0 0 24 24"><path d="M3 12.5 H20 M14.5 7.5 L20 12.5 L14.5 17.5" stroke="#e6e6e6" stroke-width="2" fill="none"/></svg></span> 160</span>
<span class="s t" style="left:1544px;top:1069px">Slave Latency</span>
<span class="s w" style="left:1700px;top:1069px">: 0</span>
<span class="s t" style="left:1544px;top:1093px">Connection Supervision Timeout Multiplier</span>
<span class="s w" style="left:2036px;top:1093px">: 1000</span>
<span class="s w" style="left:32px;top:1141px">0008 <span class="arr"><svg width="24" height="24" viewBox="0 0 24 24"><path d="M3 12.5 H20 M14.5 7.5 L20 12.5 L14.5 17.5" stroke="#e6e6e6" stroke-width="2" fill="none"/></svg></span> 000b</span>
<span class="s g" style="left:212px;top:1141px">Generic Attribute</span>
<span class="s w" style="left:416px;top:1141px"> ( 00001801-0000-1000-8000-00805f9b34fb )</span>
<span class="s w" style="left:32px;top:1165px">000a</span>
<span class="s g" style="left:236px;top:1165px">Service Changed</span>
<span class="s w" style="left:416px;top:1165px"> ( 00002a05-0000-1000-8000-00805f9b34fb )</span>
<span class="s w" style="left:1388px;top:1165px">INDICATE</span>
<span class="s w" style="left:32px;top:1213px">000c <span class="arr"><svg width="24" height="24" viewBox="0 0 24 24"><path d="M3 12.5 H20 M14.5 7.5 L20 12.5 L14.5 17.5" stroke="#e6e6e6" stroke-width="2" fill="none"/></svg></span> 001e</span>
<span class="s g" style="left:212px;top:1213px">Device Information</span>
<span class="s w" style="left:428px;top:1213px"> ( 0000180a-0000-1000-8000-00805f9b34fb )</span>
<span class="s w" style="left:32px;top:1237px">000e</span>
<span class="s g" style="left:236px;top:1237px">System ID</span>
<span class="s w" style="left:344px;top:1237px"> ( 00002a23-0000-1000-8000-00805f9b34fb )</span>
<span class="s w" style="left:1388px;top:1237px">READ</span>
<span class="s w" style="left:1544px;top:1237px">&#x27;&quot;\xb5\x18\x00\x00\xa1\x00b&#x27;</span>
<span class="s w" style="left:32px;top:1261px">0010</span>
<span class="s g" style="left:236px;top:1261px">Model Number String</span>
<span class="s w" style="left:464px;top:1261px"> ( 00002a24-0000-1000-8000-00805f9b34fb )</span>
<span class="s w" style="left:1388px;top:1261px">READ</span>
<span class="s o" style="left:1544px;top:1261px">u&#x27;Runner 2.0&#x27;</span>
<span class="s w" style="left:32px;top:1285px">0012</span>
<span class="s g" style="left:236px;top:1285px">Serial Number String</span>
<span class="s w" style="left:476px;top:1285px"> ( 00002a25-0000-1000-8000-00805f9b34fb )</span>
<span class="s w" style="left:1388px;top:1285px">READ</span>
<span class="s o" style="left:1544px;top:1285px">u&#x27;N.A.&#x27;</span>
<span class="s w" style="left:32px;top:1309px">0014</span>
<span class="s g" style="left:236px;top:1309px">Firmware Revision String</span>
<span class="s w" style="left:524px;top:1309px"> ( 00002a26-0000-1000-8000-00805f9b34fb )</span>
<span class="s w" style="left:1388px;top:1309px">READ</span>
<span class="s o" style="left:1544px;top:1309px">u&#x27;T3&#x27;</span>
<span class="s w" style="left:32px;top:1333px">0016</span>
<span class="s g" style="left:236px;top:1333px">Hardware Revision String</span>
<span class="s w" style="left:524px;top:1333px"> ( 00002a27-0000-1000-8000-00805f9b34fb )</span>
<span class="s w" style="left:1388px;top:1333px">READ</span>
<span class="s o" style="left:1544px;top:1333px">u&#x27;BM_V003R001&#x27;</span>
<span class="s w" style="left:32px;top:1357px">0018</span>
<span class="s g" style="left:236px;top:1357px">Software Revision String</span>
<span class="s w" style="left:524px;top:1357px"> ( 00002a28-0000-1000-8000-00805f9b34fb )</span>
<span class="s w" style="left:1388px;top:1357px">READ</span>
<span class="s o" style="left:1544px;top:1357px">u&#x27;5.2&#x27;</span>
<span class="s w" style="left:32px;top:1381px">001a</span>
<span class="s g" style="left:236px;top:1381px">Manufacturer Name String</span>
<span class="s w" style="left:524px;top:1381px"> ( 00002a29-0000-1000-8000-00805f9b34fb )</span>
<span class="s w" style="left:1388px;top:1381px">READ</span>
<span class="s o" style="left:1544px;top:1381px">u&#x27;L.C.HangZhou QW&#x27;</span>
<span class="s w" style="left:32px;top:1405px">001c</span>
<span class="s g" style="left:236px;top:1405px">IEEE 11073-20601 Regulatory Certification Data List</span>
<span class="s w" style="left:848px;top:1405px"> ( 00002a2a-0000-1000-8000-00805f9b34fb )</span>
<span class="s w" style="left:1388px;top:1405px">READ</span>
<span class="s o" style="left:1544px;top:1405px">&#x27;\xfe\x00experimental&#x27;</span>
<span class="s w" style="left:32px;top:1429px">001e</span>
<span class="s g" style="left:236px;top:1429px">PnP ID</span>
<span class="s w" style="left:308px;top:1429px"> ( 00002a50-0000-1000-8000-00805f9b34fb )</span>
<span class="s w" style="left:1388px;top:1429px">READ</span>
<span class="s t" style="left:1544px;top:1429px">Vendor ID</span>
<span class="s w" style="left:1652px;top:1429px">: 0×0504 ( Bluetooth SIG assigned Company Identifier )</span>
<span class="s t" style="left:1544px;top:1453px">Product ID</span>
<span class="s w" style="left:1664px;top:1453px">: 0×0000</span>
<span class="s t" style="left:1544px;top:1477px">Product Version</span>
<span class="s w" style="left:1724px;top:1477px">: 0×0110</span>
<span class="s w" style="left:32px;top:1549px">001f <span class="arr"><svg width="24" height="24" viewBox="0 0 24 24"><path d="M3 12.5 H20 M14.5 7.5 L20 12.5 L14.5 17.5" stroke="#e6e6e6" stroke-width="2" fill="none"/></svg></span> ffff</span>
<span class="s b" style="left:212px;top:1549px">e54eaa50-371b-476c-99a3-74d267e3edae</span>
<span class="s w" style="left:32px;top:1573px">0021</span>
<span class="s w" style="left:236px;top:1573px">e54eaa55-371b-476c-99a3-74d267e3edae</span>
<span class="s b" style="left:1388px;top:1573px">WRITE</span>
<span class="s w" style="left:32px;top:1597px">0023</span>
<span class="s w" style="left:236px;top:1597px">e54eaa56-371b-476c-99a3-74d267e3edae</span>
<span class="s w" style="left:1388px;top:1597px">NOTIFY</span>
<span class="s w" style="left:8px;top:1693px">@</span>
<span class="s w" style="left:32px;top:1621px">0026</span>
<span class="s w" style="left:236px;top:1621px">e54eaa57-371b-476c-99a3-74d267e3edae</span>
<span class="s b" style="left:1388px;top:1621px">WRITE</span>
<span class="s b" style="left:272px;top:829px">A1:18:B5:2</span>
<div style="position:absolute;left:272px;top:825px;width:28px;height:19px;background:#4b4540"></div>
<div style="position:absolute;left:300px;top:825px;width:25px;height:19px;background:#566f90"></div>
<div style="position:absolute;left:325px;top:825px;width:25px;height:19px;background:#f7f5f2"></div>
<div style="position:absolute;left:350px;top:825px;width:25px;height:19px;background:#d8d3ce"></div>
<div style="position:absolute;left:375px;top:825px;width:25px;height:19px;background:#def0fb"></div>
<div style="position:absolute;left:104px;top:563px;width:143px;height:24px;background:#28262c"></div>
<div style="position:absolute;left:432px;top:725px;width:18px;height:2px;background:#d8d8d8"></div>
<div style="position:absolute;left:455px;top:725px;width:9px;height:1.5px;background:#6a6e78"></div>
<div style="position:absolute;left:470px;top:725px;width:9px;height:1.5px;background:#6a6e78"></div>
<div style="position:absolute;left:486px;top:725px;width:9px;height:1.5px;background:#6a6e78"></div>
<div style="position:absolute;left:502px;top:725px;width:9px;height:1.5px;background:#6a6e78"></div>
<div style="position:absolute;left:436px;top:707px;width:39px;height:18px;background:#1f222b"></div>
<div style="position:absolute;left:475px;top:707px;width:25px;height:18px;background:#1c2534"></div>
<div style="position:absolute;left:500px;top:707px;width:25px;height:18px;background:#17304a"></div>
<svg style="position:absolute;left:1240px;top:1495px" width="130" height="85" viewBox="1240 1495 130 85">
<defs><filter id="sh" x="-20%" y="-20%" width="140%" height="140%"><feDropShadow dx="1" dy="2" stdDeviation="1.5" flood-color="#000" flood-opacity="0.45"/></filter></defs>
<path d="M1263 1502 L1324 1534 L1325.3 1508.2 L1359.7 1565.5 L1292.7 1567.2 L1313.6 1552.7 L1254.5 1519.5 A 9.6 9.6 0 0 1 1263 1502 Z" fill="#fa5846" filter="url(#sh)"/>
</svg>
<svg style="position:absolute;left:2456px;top:190px" width="18" height="40" viewBox="0 0 18 40">
<path d="M2.5 2.5 H15.5 V6.5 H11 V33.5 H15.5 V37.5 H2.5 V33.5 H7 V6.5 H2.5 Z" fill="#fafafa" stroke="#111" stroke-width="1.3"/>
</svg>
<div style="position:absolute;left:2871px;top:1132px;width:5px;height:568px;border-radius:2.5px;background:#4a4d56"></div>
<span class="s gt" style="left:2804px;top:683px">1</span><svg style="position:absolute;left:2829px;top:689px" width="12" height="12" viewBox="0 0 12 12"><circle cx="6" cy="6" r="4" fill="none" stroke="#3a3036" stroke-width="2.2"/></svg>
<span class="s gt" style="left:2804px;top:1669px">1</span><svg style="position:absolute;left:2829px;top:1675px" width="12" height="12" viewBox="0 0 12 12"><circle cx="6" cy="6" r="4" fill="none" stroke="#3a3036" stroke-width="2.2"/></svg>
</body></html>
